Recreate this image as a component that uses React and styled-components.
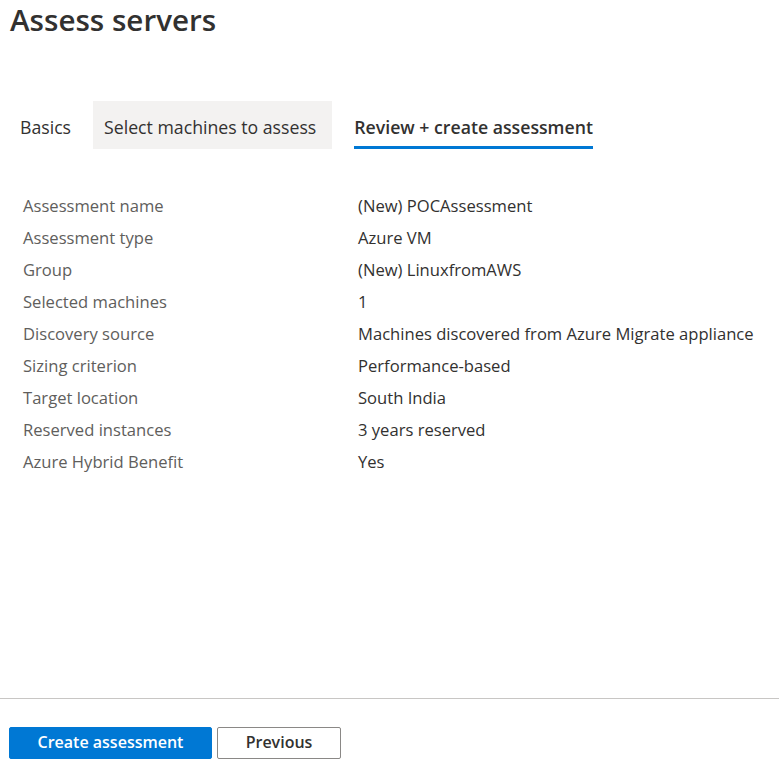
import React from "react";
import styled, { createGlobalStyle } from "styled-components";

const Global = createGlobalStyle`
  html, body { margin: 0; padding: 0; background: #fff; }
  body { font-family: "Open Sans", "Noto Sans", sans-serif; color: #323130; }
  * { box-sizing: border-box; }
`;

const Page = styled.div`
  min-height: 100vh;
  display: flex;
  flex-direction: column;
`;

const Main = styled.main`
  flex: 1;
  display: flex;
  flex-direction: column;
`;

const Title = styled.h1`
  margin: 0;
  padding: 0 0 0 10px;
  font-size: 29.6px;
  font-weight: 600;
  line-height: 40px;
  color: #323130;
`;

const Tabs = styled.div`
  display: flex;
  gap: 11px;
  margin: 61px 0 0 9px;
  height: 48px;
`;

const Tab = styled.div`
  display: flex;
  align-items: stretch;
  padding: 0 ${(p) => (p.$shaded ? 16 : 11)}px 0 11px;
  background: ${(p) => (p.$shaded ? "#f3f2f1" : "transparent")};
  font-size: 17.7px;
  font-weight: ${(p) => (p.$active ? 600 : 400)};
  color: #323130;
`;

const TabLabel = styled.span`
  display: flex;
  align-items: center;
  border-bottom: 3px solid ${(p) => (p.$active ? "#0078d4" : "transparent")};
  padding-top: 6px;
`;

const Summary = styled.dl`
  margin: 40px 0 0 23px;
  display: grid;
  grid-template-columns: 335px 1fr;
  grid-auto-rows: 32px;
  align-items: center;
  font-size: 16.6px;
`;

const Label = styled.dt`
  margin: 0;
  color: #605e5c;
`;

const Value = styled.dd`
  margin: 0;
  color: #323130;
`;

const Footer = styled.footer`
  border-top: 1px solid #c8c6c4;
  padding: 28px 9px 23px;
  display: flex;
  gap: 5px;
`;

const Button = styled.button`
  height: 32px;
  width: ${(p) => p.$w}px;
  border-radius: 2px;
  font-family: inherit;
  font-size: 16px;
  font-weight: 600;
  line-height: 28px;
  padding: 0 0 2px;
  cursor: pointer;
  border: 1px solid ${(p) => (p.$primary ? "#0078d4" : "#8a8886")};
  background: ${(p) => (p.$primary ? "#0078d4" : "#fff")};
  color: ${(p) => (p.$primary ? "#fff" : "#323130")};
`;

const rows = [
  ["Assessment name", "(New) POCAssessment"],
  ["Assessment type", "Azure VM"],
  ["Group", "(New) LinuxfromAWS"],
  ["Selected machines", "1"],
  ["Discovery source", "Machines discovered from Azure Migrate appliance"],
  ["Sizing criterion", "Performance-based"],
  ["Target location", "South India"],
  ["Reserved instances", "3 years reserved"],
  ["Azure Hybrid Benefit", "Yes"],
];

export default function App() {
  return (
    <Page>
      <Global />
      <Main>
        <Title>Assess servers</Title>
        <Tabs>
          <Tab><TabLabel>Basics</TabLabel></Tab>
          <Tab $shaded><TabLabel>Select machines to assess</TabLabel></Tab>
          <Tab $active><TabLabel $active>Review + create assessment</TabLabel></Tab>
        </Tabs>
        <Summary>
          {rows.map(([k, v]) => (
            <React.Fragment key={k}>
              <Label>{k}</Label>
              <Value>{v}</Value>
            </React.Fragment>
          ))}
        </Summary>
      </Main>
      <Footer>
        <Button $primary $w={203}>Create assessment</Button>
        <Button $w={124}>Previous</Button>
      </Footer>
    </Page>
  );
}
